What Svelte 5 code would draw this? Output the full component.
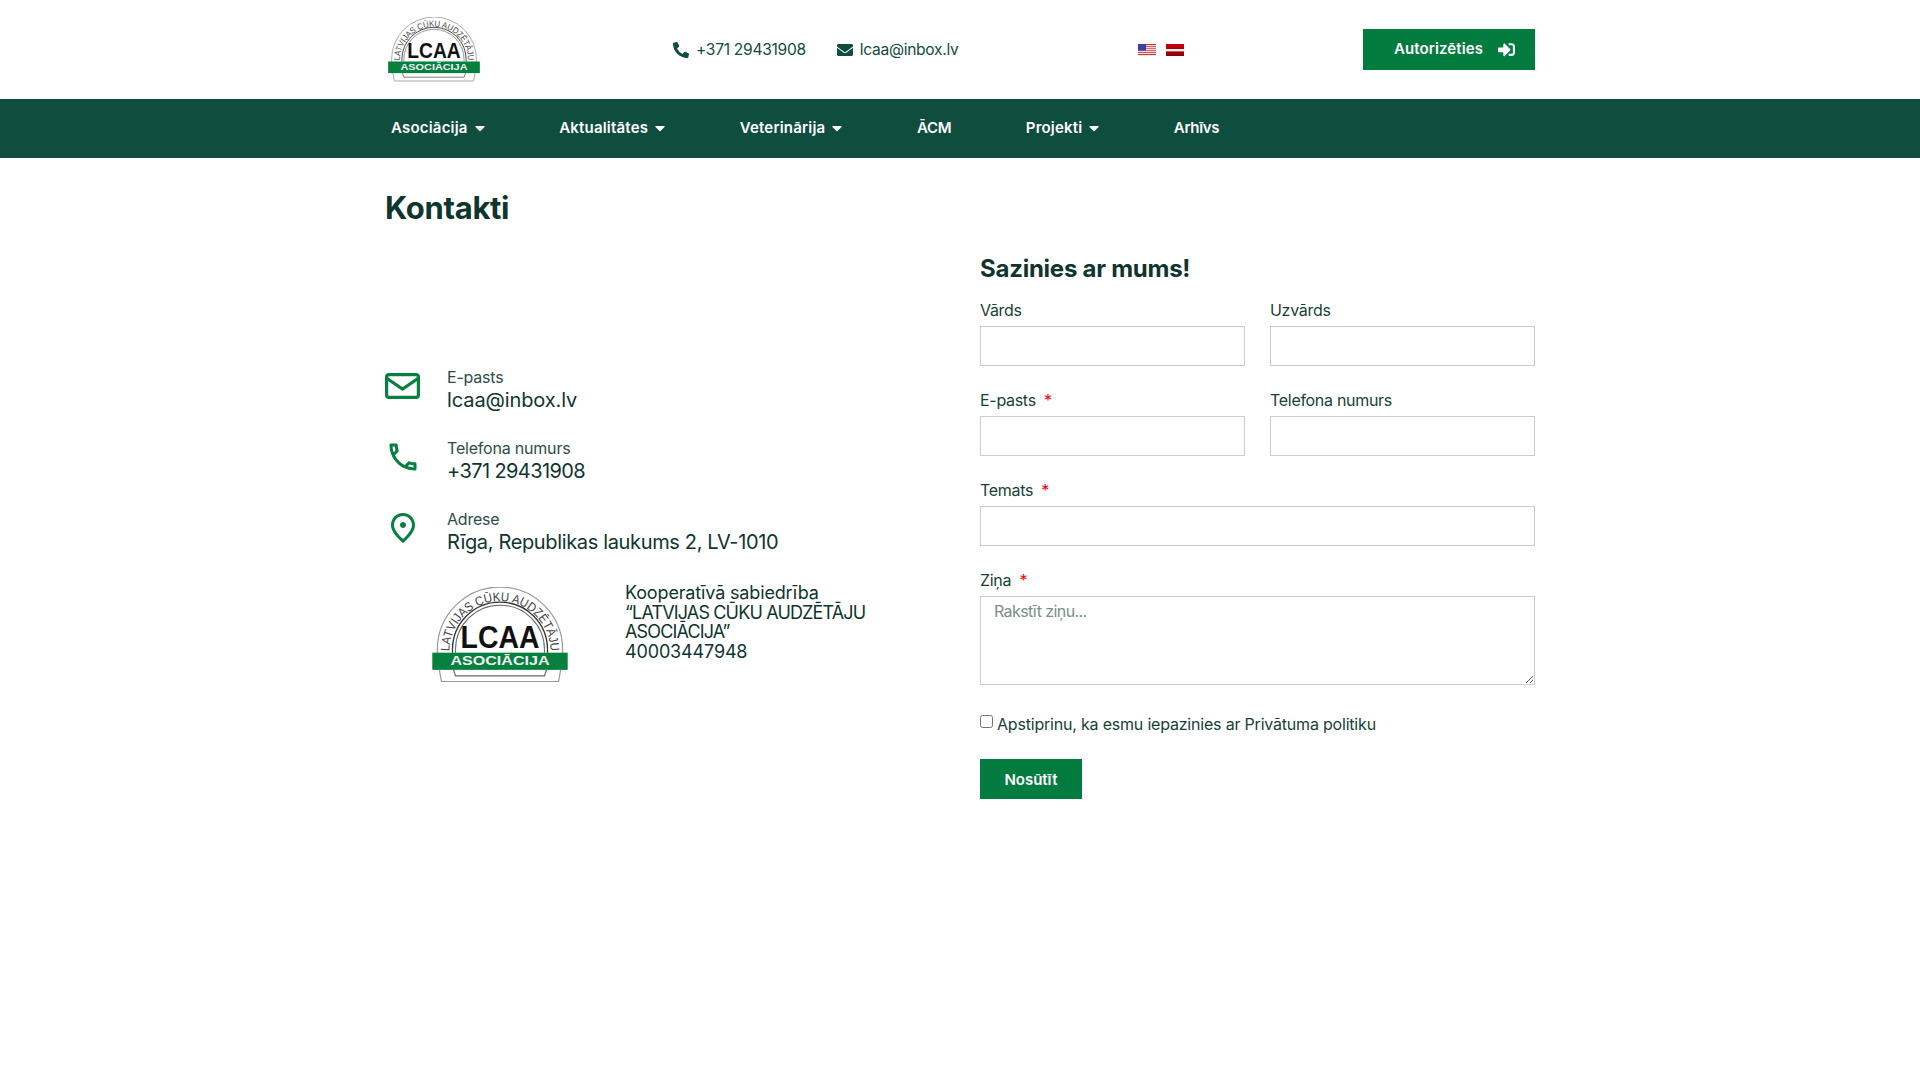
<script>
  const navItems = [
    { t: 'Asociācija', caret: true, tight: false },
    { t: 'Aktualitātes', caret: true, tight: false },
    { t: 'Veterinārija', caret: true, tight: false },
    { t: 'ĀCM', caret: false, tight: true },
    { t: 'Projekti', caret: true, tight: false },
    { t: 'Arhīvs', caret: false, tight: true }
  ];
</script>

{#snippet logo(cls)}
  <svg class={cls} viewBox="0 0 134 95" aria-label="LCAA">
    <defs>
      <path id="logo-arc" d="M17 64 A50 50 0 0 1 117 64" />
    </defs>
    <path d="M5 66 V62 A62 62 0 0 1 129 62 V66" fill="#fff" stroke="#9a9a9a" stroke-width="1.2" />
    <path d="M20 65 V62 A47 47 0 0 1 114 62 V65" fill="none" stroke="#333" stroke-width="1.3" />
    <path d="M23 65 V62 A44 44 0 0 1 111 62 V65" fill="none" stroke="#666" stroke-width="1" />
    <text class="arc"><textPath href="#logo-arc" startOffset="50%" text-anchor="middle" textLength="156" lengthAdjust="spacingAndGlyphs">LATVIJAS CŪKU AUDZĒTĀJU</textPath></text>
    <text class="lcaa" x="67" y="60" text-anchor="middle" textLength="78" lengthAdjust="spacingAndGlyphs">LCAA</text>
    <path d="M7 82 L9 93.5 H125 L127 82" fill="#fff" stroke="#9a9a9a" stroke-width="1.2" />
    <path d="M21 82 L23 88 H111 L113 82" fill="#fff" stroke="#666" stroke-width="1.2" />
    <rect x="0" y="65" width="134" height="17" fill="#06803f" />
    <text class="band" x="67" y="77.5" text-anchor="middle" textLength="98" lengthAdjust="spacingAndGlyphs">ASOCIĀCIJA</text>
  </svg>
{/snippet}

<header class="top wrap">
  <div class="logo-box">{@render logo('logo-small')}</div>
  <div class="contacts">
    <span class="contact">
      <svg class="ico-sm" viewBox="0 0 512 512"><path d="M497.39 361.8l-112-48a24 24 0 0 0-28 6.9l-49.6 60.6A370.66 370.66 0 0 1 130.6 204.11l60.6-49.6a23.94 23.94 0 0 0 6.9-28l-48-112A24.16 24.16 0 0 0 122.6.61l-104 24A24 24 0 0 0 0 48c0 256.5 207.9 464 464 464a24 24 0 0 0 23.4-18.6l24-104a24.29 24.29 0 0 0-14.01-27.6z"/></svg>
      +371 29431908
    </span>
    <span class="contact">
      <svg class="ico-sm" viewBox="0 0 512 512"><path d="M502.3 190.8c3.9-3.1 9.7-.2 9.7 4.7V400c0 26.5-21.5 48-48 48H48c-26.5 0-48-21.5-48-48V195.6c0-5 5.7-7.8 9.7-4.7 22.4 17.4 52.1 39.5 154.1 113.6 21.1 15.4 56.7 47.8 92.2 47.6 35.7.3 72-32.8 92.3-47.6 102-74.1 131.6-96.3 154-113.7zM256 320c23.2.4 56.6-29.2 73.4-41.4 132.7-96.3 142.8-104.7 173.4-128.7 5.8-4.5 9.2-11.5 9.2-18.9v-19c0-26.5-21.5-48-48-48H48C21.5 64 0 85.5 0 112v19c0 7.4 3.4 14.3 9.2 18.9 30.6 23.9 40.7 32.4 173.4 128.7 16.8 12.2 50.2 41.8 73.4 41.4z"/></svg>
      lcaa@inbox.lv
    </span>
  </div>
  <div class="flags">
    <svg class="flag" viewBox="0 0 18 12" preserveAspectRatio="none">
      <rect width="18" height="12" fill="#f4dada"/>
      <rect y="0" width="18" height="1" fill="#d8292f"/><rect y="2" width="18" height="1" fill="#e05a5e"/>
      <rect y="4" width="18" height="1" fill="#e06a6e"/><rect y="6" width="18" height="1" fill="#d06a70"/>
      <rect y="8" width="18" height="1" fill="#c85a60"/><rect y="10" width="18" height="1" fill="#c04048"/>
      <rect width="8" height="6.5" fill="#3f3f9f"/>
    </svg>
    <svg class="flag" viewBox="0 0 18 12" preserveAspectRatio="none">
      <defs><linearGradient id="lv" x1="0" y1="0" x2="0" y2="1"><stop offset="0" stop-color="#c8000e"/><stop offset="1" stop-color="#8e0008"/></linearGradient></defs>
      <rect width="18" height="12" fill="url(#lv)"/>
      <rect y="5" width="18" height="2.4" fill="#f4eeee"/>
    </svg>
  </div>
  <a class="login" href="#login">
    <span class="login-text">Autorizēties</span>
    <svg class="ico-login" viewBox="0 0 512 512"><path d="M416 448h-84c-6.6 0-12-5.4-12-12v-40c0-6.6 5.4-12 12-12h84c17.7 0 32-14.3 32-32V160c0-17.7-14.3-32-32-32h-84c-6.6 0-12-5.4-12-12V76c0-6.6 5.4-12 12-12h84c53 0 96 43 96 96v192c0 53-43 96-96 96zm-47-201L201 79c-15-15-41-4.5-41 17v96H24c-13.3 0-24 10.7-24 24v96c0 13.3 10.7 24 24 24h136v96c0 21.5 26 32 41 17l168-168c9.3-9.4 9.3-24.6 0-34z"/></svg>
  </a>
</header>

<nav class="nav">
  <div class="wrap nav-inner">
    {#each navItems as item}
      <a class="nav-item" class:tight={item.tight} href="#nav">
        <span class="nav-text">{item.t}</span>
        {#if item.caret}
          <svg class="caret" viewBox="0 0 10 6"><path d="M1 .5h8c.6 0 .9.7.5 1.1l-4 3.9c-.3.3-.7.3-1 0l-4-3.9C.1 1.2.4.5 1 .5z"/></svg>
        {/if}
      </a>
    {/each}
  </div>
</nav>

<main class="wrap">
  <h1>Kontakti</h1>
  <div class="cols">
    <section class="left">
      <div class="info">
        <svg class="ico-env" viewBox="0 0 35 26"><rect x="1.6" y="1.6" width="31.8" height="22.8" rx="2.5" fill="none" stroke="#06803f" stroke-width="3.2"/><path d="M2 5.5 L17.5 16 L33 5.5" fill="none" stroke="#06803f" stroke-width="3.2"/></svg>
        <div><div class="lab">E-pasts</div><div class="val mail">lcaa@inbox.lv</div></div>
      </div>
      <div class="info">
        <svg class="ico-lg" viewBox="0 0 24 24"><path d="M6.54 5c.06.89.21 1.76.45 2.59l-1.2 1.2c-.41-1.2-.67-2.47-.76-3.79h1.51m9.86 12.02c.85.24 1.72.39 2.6.45v1.49c-1.32-.09-2.59-.35-3.8-.75l1.2-1.19M7.5 3H4c-.55 0-1 .45-1 1 0 9.39 7.61 17 17 17 .55 0 1-.45 1-1v-3.49c0-.55-.45-1-1-1-1.24 0-2.45-.2-3.57-.57-.1-.04-.21-.05-.31-.05-.26 0-.51.1-.71.29l-2.2 2.2c-2.83-1.45-5.15-3.76-6.59-6.59l2.2-2.2c.28-.28.36-.67.25-1.02C8.7 6.45 8.5 5.25 8.5 4c0-.55-.45-1-1-1z"/></svg>
        <div><div class="lab">Telefona numurs</div><div class="val num">+371 29431908</div></div>
      </div>
      <div class="info">
        <svg class="ico-lg" viewBox="0 0 24 24"><path d="M12 12c-1.1 0-2-.9-2-2s.9-2 2-2 2 .9 2 2-.9 2-2 2zm6-1.8C18 6.57 15.35 4 12 4s-6 2.57-6 6.2c0 2.34 1.95 5.44 6 9.14 4.05-3.7 6-6.8 6-9.14zM12 2c4.2 0 8 3.22 8 8.2 0 3.32-2.67 7.25-8 11.8-5.33-4.55-8-8.48-8-11.8C4 5.22 7.8 2 12 2z"/></svg>
        <div><div class="lab">Adrese</div><div class="val addr">Rīga, Republikas laukums 2, LV-1010</div></div>
      </div>
      <div class="company">
        {@render logo('logo-big')}
        <p>Kooperatīvā sabiedrība<br /><span class="caps">“LATVIJAS CŪKU AUDZĒTĀJU ASOCIĀCIJA”</span><br />40003447948</p>
      </div>
    </section>

    <form class="form" onsubmit={(e) => e.preventDefault()}>
      <h2>Sazinies ar mums!</h2>
      <div class="fields">
        <label class="field"><span>Vārds</span><input type="text" /></label>
        <label class="field"><span>Uzvārds</span><input type="text" /></label>
        <label class="field"><span>E-pasts <b>*</b></span><input type="text" /></label>
        <label class="field"><span>Telefona numurs</span><input type="text" /></label>
        <label class="field full"><span>Temats <b>*</b></span><input type="text" /></label>
        <label class="field full"><span>Ziņa <b>*</b></span><textarea placeholder="Rakstīt ziņu..."></textarea></label>
      </div>
      <label class="check"><input type="checkbox" /><span>Apstiprinu, ka esmu iepazinies ar Privātuma politiku</span></label>
      <button type="submit" class="send">Nosūtīt</button>
    </form>
  </div>
</main>

<style>
  :global(body) {
    margin: 0;
    background: #fff;
    font-family: Inter, "Noto Sans", sans-serif;
    color: #0f352f;
    font-size: 16px;
  }
  .wrap { width: 1150px; margin: 0 auto; }
  a { text-decoration: none; color: inherit; }

  .arc { font-family: "Liberation Sans", sans-serif; font-size: 12.5px; fill: #444; }
  .lcaa { font-family: "Liberation Sans", sans-serif; font-weight: 700; font-size: 31px; fill: #111; }
  .band { font-family: "Liberation Sans", sans-serif; font-weight: 700; font-size: 12px; fill: #f2f2f2; }

  .top { display: flex; align-items: center; height: 99px; }
  .logo-box { width: 288px; padding-left: 3px; box-sizing: border-box; display: flex; }
  .logo-small { width: 92px; height: 65px; }
  .contacts { display: flex; gap: 31px; }
  .contact { display: inline-flex; align-items: center; gap: 7px; font-size: 15.6px; letter-spacing: -0.3px; color: #0f4d3e; white-space: nowrap; }
  .ico-sm { width: 16px; height: 16px; fill: #0f4d3e; }
  .flags { display: flex; gap: 10px; margin-left: 180px; }
  .flag { width: 18px; height: 12px; }
  .login {
    margin-left: auto; width: 172px; height: 41px; box-sizing: border-box;
    background: #027c3e; color: #fff; display: flex; align-items: center; padding-left: 31px; gap: 15px;
    font-size: 15px; font-weight: 600; letter-spacing: 0.1px;
  }
  .login-text { margin-bottom: 2px; }
  .ico-login { width: 17px; height: 17px; fill: #fff; }

  .nav { background: #0f4d3e; height: 59px; }
  .nav-inner { display: flex; align-items: center; height: 100%; padding-left: 6px; box-sizing: border-box; gap: 74.5px; }
  .nav-item { display: inline-flex; align-items: center; gap: 7px; color: #fff; font-size: 15px; font-weight: 600; letter-spacing: 0.2px; white-space: nowrap; }
  .tight { letter-spacing: -0.3px; }
  .nav-text { margin-bottom: 2px; }
  .caret { width: 10px; height: 7px; fill: #fff; }

  h1 { margin: 0; padding-top: 29px; font-size: 31px; line-height: 42px; font-weight: 700; letter-spacing: -0.3px; color: #0f352f; }
  .cols { display: grid; grid-template-columns: 595px 555px; }
  .left { padding-top: 131px; }
  .info { display: flex; align-items: center; gap: 26px; height: 58px; margin-bottom: 13px; }
  .ico-env { width: 35px; height: 26px; margin-right: 1px; margin-bottom: 6px; }
  .ico-lg { width: 36px; height: 36px; fill: #06803f; margin-bottom: 6px; }
  .lab { font-size: 16px; line-height: 22px; letter-spacing: -0.2px; color: #2d4d46; }
  .val { font-size: 20px; line-height: 24px; color: #0f352f; }
  .mail { letter-spacing: -0.1px; }
  .num { letter-spacing: -0.6px; }
  .addr { letter-spacing: -0.35px; }
  .company { display: flex; align-items: flex-start; gap: 57px; padding-left: 47px; margin-top: 27px; }
  .logo-big { width: 136px; height: 96px; flex: none; }
  .company p { margin: -4px 0 0; width: 260px; font-size: 18px; line-height: 19.7px; font-weight: 400; letter-spacing: -0.15px; color: #0f352f; }
  .caps { letter-spacing: -0.85px; }

  .form { padding-top: 24px; }
  h2 { margin: 0 0 14px; font-size: 24px; line-height: 32px; font-weight: 700; letter-spacing: -0.25px; color: #0f352f; }
  .fields { display: grid; grid-template-columns: 265px 265px; column-gap: 25px; row-gap: 23px; }
  .field { display: block; }
  .field span { display: block; font-size: 16px; line-height: 22px; margin-bottom: 5px; letter-spacing: -0.3px; color: #183f37; }
  .field b { color: #f00; font-weight: 400; margin-left: 4px; }
  .full { grid-column: 1 / -1; }
  input[type="text"], textarea {
    display: block; width: 100%; box-sizing: border-box; height: 40px; border: 1px solid #ccc; background: #fff; border-radius: 0; padding: 4px 13px; font-family: inherit; font-size: 16px; margin: 0;
  }
  textarea { height: 89px; resize: vertical; }
  textarea::placeholder { color: #7b8e89; letter-spacing: -0.6px; }
  .check { display: flex; align-items: flex-start; gap: 4px; margin-top: 28px; font-size: 16px; line-height: 22px; letter-spacing: -0.2px; color: #183f37; }
  .check input { margin: 2px 0 0; width: 13px; height: 13px; }
  .send {
    display: block; margin-top: 24px; width: 102px; height: 40px; border: 0; background: #027c3e; color: #fff; font-family: inherit; font-size: 15px; font-weight: 600; letter-spacing: 0; padding: 0;
  }
</style>
